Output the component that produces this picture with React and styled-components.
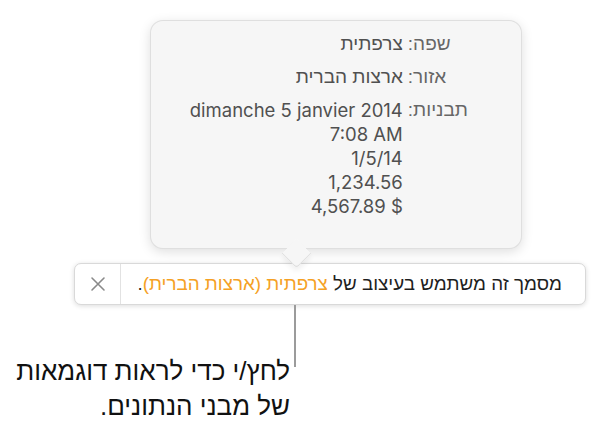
import React from "react";
import styled, { createGlobalStyle } from "styled-components";

const Global = createGlobalStyle`
  html, body { margin: 0; padding: 0; background: #ffffff; }
  body { font-family: "Liberation Sans", Arial, sans-serif; }
`;

const Page = styled.div`
  width: 609px;
  height: 425px;
  padding-top: 20px;
  box-sizing: border-box;
  display: flex;
  flex-direction: column;
  overflow: hidden;
`;

const Popover = styled.div`
  position: relative;
  margin-left: 150px;
  width: 372px;
  height: 229px;
  box-sizing: border-box;
  background: #f6f6f6;
  border: 1px solid rgba(0, 0, 0, 0.09);
  border-radius: 13px;
  box-shadow: 0 3px 12px rgba(0, 0, 0, 0.13);
  padding: 11px 53px 0 0;
  display: flex;
  justify-content: flex-end;
  &::after {
    content: "";
    position: absolute;
    left: 135px;
    top: 222px;
    width: 20px;
    height: 20px;
    background: #f6f6f6;
    border-right: 1px solid rgba(0, 0, 0, 0.09);
    border-bottom: 1px solid rgba(0, 0, 0, 0.09);
    border-bottom-right-radius: 4px;
    transform: rotate(45deg);
    box-shadow: 3px 3px 5px rgba(0, 0, 0, 0.06);
  }
`;

const InfoGrid = styled.div`
  direction: rtl;
  display: grid;
  grid-template-columns: auto auto;
  column-gap: 5px;
  row-gap: 9px;
  align-content: start;
  line-height: 24px;
`;

const Label = styled.div`
  color: #666666;
  text-align: left;
  font-family: "Liberation Sans", Arial, sans-serif;
  font-size: 19px;
`;

const Value = styled.div`
  color: #505050;
  text-align: right;
  font-size: ${(p) => (p.$hebrew ? "19px" : "18.5px")};
  font-family: ${(p) =>
    p.$hebrew ? `"Liberation Sans", Arial, sans-serif` : `Inter, "Liberation Sans", sans-serif`};
`;

const Line = styled.div`
  direction: ltr;
  unicode-bidi: plaintext;
  text-align: right;
  white-space: nowrap;
`;

const Bar = styled.div`
  margin-top: 14px;
  margin-left: 74px;
  width: 512px;
  height: 42px;
  box-sizing: border-box;
  background: #ffffff;
  border: 1px solid #d9d9d9;
  border-radius: 7px;
  box-shadow: 0 1px 5px rgba(0, 0, 0, 0.14);
  direction: rtl;
  display: flex;
  align-items: stretch;
`;

const Message = styled.div`
  padding-right: 23px;
  display: flex;
  align-items: center;
  font-size: 18.8px;
  color: #1e1e1e;
  white-space: nowrap;
`;

const Accent = styled.span`
  color: #f5a125;
`;

const CloseButton = styled.div`
  margin-right: auto;
  width: 45px;
  border-right: 1px solid #e2e2e2;
  display: flex;
  align-items: center;
  justify-content: center;
`;

const Callout = styled.div`
  display: flex;
  align-items: flex-start;
  gap: 4px;
`;

const CalloutText = styled.div`
  width: 290px;
  padding-top: 49px;
  direction: rtl;
  text-align: right;
  font-size: 26px;
  line-height: 35px;
  color: #111111;
  white-space: nowrap;
`;

const Leader = styled.div`
  width: 2px;
  height: 62px;
  background: #9b9b9b;
`;

export default function App() {
  return (
    <Page>
      <Global />
      <Popover>
        <InfoGrid>
          <Label>שפה:</Label>
          <Value $hebrew>צרפתית</Value>
          <Label>אזור:</Label>
          <Value $hebrew>ארצות הברית</Value>
          <Label>תבניות:</Label>
          <Value>
            <Line>dimanche 5 janvier 2014</Line>
            <Line>7:08 AM</Line>
            <Line>1/5/14</Line>
            <Line>1,234.56</Line>
            <Line>4,567.89 $</Line>
          </Value>
        </InfoGrid>
      </Popover>
      <Bar>
        <Message>
          מסמך זה משתמש בעיצוב של&nbsp;<Accent>צרפתית (ארצות הברית)</Accent>.
        </Message>
        <CloseButton>
          <svg width="16" height="16" viewBox="0 0 16 16">
            <path d="M2 2 L14 14 M14 2 L2 14" stroke="#8a8a8a" strokeWidth="1.6" strokeLinecap="round" fill="none" />
          </svg>
        </CloseButton>
      </Bar>
      <Callout>
        <CalloutText>
          לחץ/י כדי לראות דוגמאות
          <br />
          של מבני הנתונים.
        </CalloutText>
        <Leader />
      </Callout>
    </Page>
  );
}
